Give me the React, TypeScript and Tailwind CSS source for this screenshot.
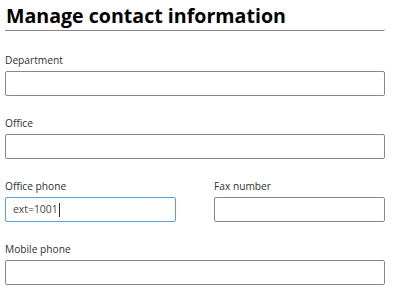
import React from "react";

const font = { fontFamily: '"Open Sans", "Noto Sans", sans-serif' };

function Field({ label, value, focused }: { label: string; value?: string; focused?: boolean }) {
  return (
    <div className="flex flex-col">
      <div className="h-[16px] text-[10.2px] leading-[16px] text-[#323130]">{label}</div>
      <div
        className={
          "mt-[3px] h-[25px] rounded-[2px] border flex items-center pl-[7px] text-[10.4px] text-[#484644] " +
          (focused ? "border-[#5b9de6]" : "border-[#8a8886]")
        }
      >
        {value && (
          <>
            <span>{value}</span>
            <span className="ml-[1px] w-px h-[14px] bg-[#323130]" />
          </>
        )}
      </div>
    </div>
  );
}

export default function App() {
  return (
    <div className="w-[400px] h-[296px] bg-white overflow-hidden pl-[5px] pr-[15px]" style={font}>
      <div className="h-[31px] border-b border-[#8a8886] rounded-br-[2px] flex items-start">
        <h1 className="ml-px mt-[3px] text-[19.6px] leading-[25px] font-bold text-[#000]">
          Manage contact information
        </h1>
      </div>
      <div className="mt-[21px] flex flex-col gap-[19px]">
        <Field label="Department" />
        <Field label="Office" />
        <div className="grid grid-cols-[171px_171px] gap-x-[38px]">
          <Field label="Office phone" value="ext=1001" focused />
          <Field label="Fax number" />
        </div>
        <Field label="Mobile phone" />
      </div>
    </div>
  );
}
